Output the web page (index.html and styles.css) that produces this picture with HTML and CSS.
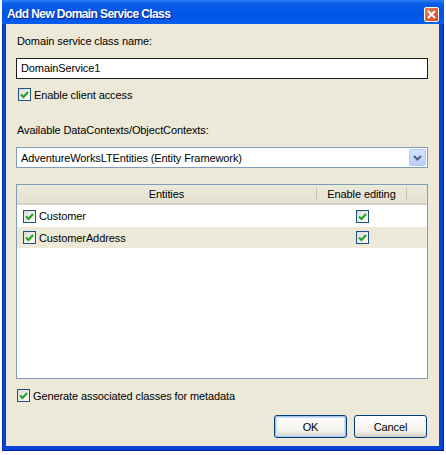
FILE: index.html
```html
<!DOCTYPE html>
<html>
<head>
<meta charset="utf-8">
<link rel="stylesheet" href="styles.css">
</head>
<body>
<div class="window">
  <div class="titlebar">
    <span class="title">Add New Domain Service Class</span>
    <span class="close"><svg width="9" height="9" viewBox="0 0 9 9"><path d="M1 1 L8 8 M8 1 L1 8" stroke="#fff" stroke-width="2"/></svg></span>
  </div>
  <div class="client">
    <div class="label first">Domain service class name:</div>
    <div class="textbox">DomainService1</div>
    <div class="checkrow one">
      <span class="cb"><svg width="9" height="9" viewBox="0 0 9 9"><path d="M1 4.5 L3.5 7 L8 2" stroke="#21a121" stroke-width="2" fill="none"/></svg></span>
      <span>Enable client access</span>
    </div>
    <div class="label second">Available DataContexts/ObjectContexts:</div>
    <div class="combo">
      <span class="combo-text">AdventureWorksLTEntities (Entity Framework)</span>
      <span class="drop"><svg width="9" height="6" viewBox="0 0 9 6"><path d="M1 1 L4.5 4.5 L8 1" stroke="#4d6185" stroke-width="2" fill="none"/></svg></span>
    </div>
    <div class="grid">
      <div class="ghead">
        <div class="hcell c1">Entities</div>
        <div class="hcell c2">Enable editing</div>
        <div class="hcell c3"></div>
      </div>
      <div class="grow">
        <div class="cell c1 name">
          <span class="cb"><svg width="9" height="9" viewBox="0 0 9 9"><path d="M1 4.5 L3.5 7 L8 2" stroke="#21a121" stroke-width="2" fill="none"/></svg></span>
          <span>Customer</span>
        </div>
        <div class="cell c2 mid">
          <span class="cb"><svg width="9" height="9" viewBox="0 0 9 9"><path d="M1 4.5 L3.5 7 L8 2" stroke="#21a121" stroke-width="2" fill="none"/></svg></span>
        </div>
      </div>
      <div class="grow alt">
        <div class="cell c1 name">
          <span class="cb"><svg width="9" height="9" viewBox="0 0 9 9"><path d="M1 4.5 L3.5 7 L8 2" stroke="#21a121" stroke-width="2" fill="none"/></svg></span>
          <span>CustomerAddress</span>
        </div>
        <div class="cell c2 mid">
          <span class="cb"><svg width="9" height="9" viewBox="0 0 9 9"><path d="M1 4.5 L3.5 7 L8 2" stroke="#21a121" stroke-width="2" fill="none"/></svg></span>
        </div>
      </div>
    </div>
    <div class="checkrow two">
      <span class="cb"><svg width="9" height="9" viewBox="0 0 9 9"><path d="M1 4.5 L3.5 7 L8 2" stroke="#21a121" stroke-width="2" fill="none"/></svg></span>
      <span>Generate associated classes for metadata</span>
    </div>
    <div class="buttons">
      <div class="btn default">OK</div>
      <div class="btn">Cancel</div>
    </div>
  </div>
</div>
</body>
</html>
```
FILE: styles.css
```css
html, body {
  margin: 0;
  padding: 0;
  background: #ffffff;
}
body {
  font-family: "Liberation Sans", Arial, sans-serif;
  font-size: 11px;
  letter-spacing: -0.1px;
  color: #000;
}
.window {
  margin-left: 2px;
  width: 442px;
  height: 451px;
  display: flex;
  flex-direction: column;
  background: #0843d8;
  box-shadow: inset 1px 0 0 #0a2fb0, inset -1px 0 0 #001ea0, inset 0 -1px 0 #001ea0;
  box-sizing: border-box;
}
.titlebar {
  height: 24px;
  display: flex;
  align-items: center;
  justify-content: space-between;
  padding: 4px 5px 0 5px;
  box-sizing: border-box;
  background: linear-gradient(#2f7ff5 0%, #0a5fe8 15%, #0054e3 55%, #0058ec 85%, #0a5fe8 100%);
}
.title {
  color: #fff;
  font-weight: bold;
  font-size: 12px;
  letter-spacing: -0.6px;
  text-shadow: 1px 1px 0 #0a1e8c;
}
.close {
  width: 15px;
  height: 15px;
  box-sizing: border-box;
  margin-top: 1px;
  border: 1px solid #fff;
  border-radius: 2px;
  background: linear-gradient(135deg, #e9825f, #d4431c);
  display: flex;
  align-items: center;
  justify-content: center;
}
.client {
  flex: 1;
  margin: 0 5px 5px 4px;
  background: #ece9d8;
  padding: 11px 11px 0 10px;
  display: flex;
  flex-direction: column;
}
.label {
  height: 13px;
  line-height: 13px;
  padding-left: 1px;
}
.label.second {
  margin-top: 23px;
}
.textbox {
  margin-top: 10px;
  height: 21px;
  border: 1px solid #1c1c1c;
  background: #fff;
  box-sizing: border-box;
  padding-left: 4px;
  line-height: 19px;
}
.checkrow {
  display: flex;
  align-items: center;
  gap: 3px;
  height: 13px;
}
.checkrow.one {
  margin-top: 9px;
  padding-left: 2px;
}
.checkrow.two {
  margin-top: 10px;
  padding-left: 1px;
}
.cb {
  width: 13px;
  height: 13px;
  box-sizing: border-box;
  border: 1px solid #1c5180;
  background: linear-gradient(135deg, #dcdcd7, #fbfbf9);
  display: inline-flex;
  align-items: center;
  justify-content: center;
  flex: none;
}
.combo {
  margin-top: 10px;
  height: 21px;
  border: 1px solid #7f9db9;
  background: #fff;
  box-sizing: border-box;
  display: flex;
  align-items: center;
  justify-content: space-between;
  padding: 1px 1px 1px 4px;
}
.drop {
  width: 17px;
  height: 17px;
  box-sizing: border-box;
  border: 1px solid #b9cbf3;
  border-radius: 2px;
  background: linear-gradient(#d6e2fd, #b8cdfb);
  display: flex;
  align-items: center;
  justify-content: center;
}
.grid {
  margin-top: 16px;
  height: 195px;
  border: 1px solid #7f9db9;
  background: #fff;
  box-sizing: border-box;
  display: flex;
  flex-direction: column;
}
.ghead {
  display: flex;
  height: 20px;
  background: linear-gradient(#ebeadb, #e5e2d2);
  border-bottom: 2px solid #d6d2c2;
  box-sizing: border-box;
}
.hcell {
  display: flex;
  align-items: center;
  justify-content: center;
  box-sizing: border-box;
}
.hcell.c1, .hcell.c2 {
  border-right: 1px solid #c7c5b2;
  margin: 2px 0 2px;
}
.c1 { width: 300px; }
.c2 { width: 90px; }
.c3 { flex: 1; }
.grow {
  display: flex;
  height: 22px;
  align-items: center;
}
.grow.alt {
  background: #ece9d8;
  height: 21px;
}
.cell.name {
  display: flex;
  align-items: center;
  gap: 3px;
  padding-left: 6px;
  box-sizing: border-box;
}
.cell.mid {
  display: flex;
  justify-content: center;
}
.buttons {
  margin-top: 13px;
  display: flex;
  justify-content: flex-end;
  gap: 7px;
  padding-right: 1px;
}
.btn {
  width: 73px;
  height: 23px;
  box-sizing: border-box;
  border: 1px solid #003c74;
  border-radius: 3px;
  background: linear-gradient(#ffffff, #f3f2ec 70%, #d6d0c5);
  display: flex;
  align-items: center;
  justify-content: center;
}
.btn.default {
  box-shadow: inset 0 0 0 1px #a9c4ee, inset 0 0 0 2px #cee0f8;
}
```
